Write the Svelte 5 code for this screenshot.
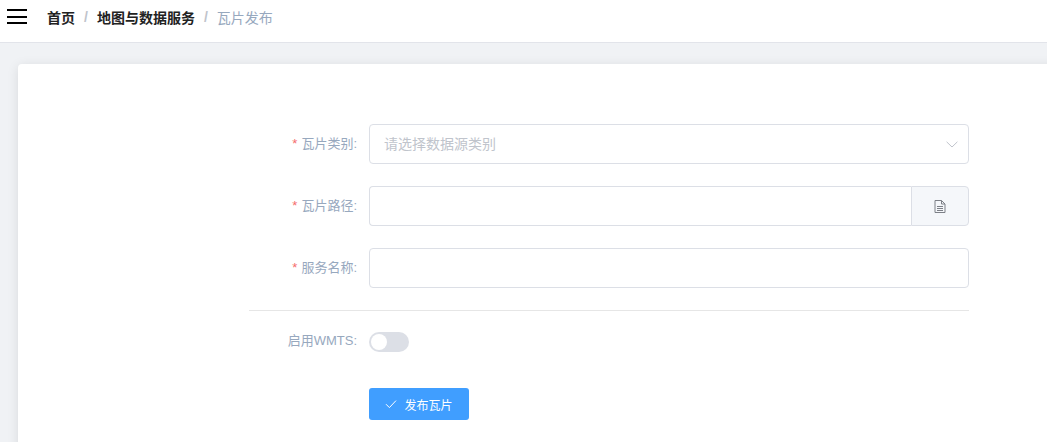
<script lang="ts">
	let wmts = $state(false);
	let category = $state('');
	let tilePath = $state('');
	let serviceName = $state('');
</script>

<div class="page">
	<header class="topbar">
		<button class="hamburger" aria-label="menu">
			<span></span>
			<span></span>
			<span></span>
		</button>
		<nav class="crumbs">
			<span class="crumb">首页</span>
			<span class="sep">/</span>
			<span class="crumb">地图与数据服务</span>
			<span class="sep">/</span>
			<span class="crumb current">瓦片发布</span>
		</nav>
	</header>

	<main class="content">
		<section class="card">
			<form class="form" onsubmit={(e) => e.preventDefault()}>
				<div class="row">
					<label class="label" for="category"><i>*</i>瓦片类别:</label>
					<div class="select">
						<input id="category" bind:value={category} placeholder="请选择数据源类别" readonly />
						<svg class="chevron" viewBox="0 0 12 7" width="12" height="7" aria-hidden="true">
							<path d="M0.6 0.8 L6 6 L11.4 0.8" fill="none" stroke="#c0c4cc" stroke-width="1" />
						</svg>
					</div>
				</div>

				<div class="row">
					<label class="label" for="path"><i>*</i>瓦片路径:</label>
					<div class="group">
						<input id="path" bind:value={tilePath} />
						<button type="button" class="append" aria-label="browse">
							<svg viewBox="0 0 12 13" width="12" height="13" aria-hidden="true">
								<path
									d="M1 0.5 H7.5 L11 4 V12.5 H1 Z M7.5 0.5 V4 H11 M3 6.5 H9 M3 8.5 H9 M3 10.5 H9"
									fill="none"
									stroke="#7d8087"
									stroke-width="1"
								/>
							</svg>
						</button>
					</div>
				</div>

				<div class="row">
					<label class="label" for="name"><i>*</i>服务名称:</label>
					<input id="name" class="input" bind:value={serviceName} />
				</div>

				<div class="divider"></div>

				<div class="row switch-row">
					<span class="label">启用WMTS:</span>
					<button
						type="button"
						class="switch"
						class:on={wmts}
						aria-label="WMTS"
						onclick={() => (wmts = !wmts)}
					></button>
				</div>

				<div class="row submit-row">
					<span class="label"></span>
					<button type="submit" class="primary">
						<svg viewBox="0 0 12 10" width="12" height="10" aria-hidden="true">
							<path d="M1 5.2 L4.4 8.6 L11 1.6" fill="none" stroke="#fff" stroke-width="1" />
						</svg>
						发布瓦片
					</button>
				</div>
			</form>
		</section>
	</main>
</div>

<style>
	:global(body) {
		margin: 0;
		overflow: hidden;
	}

	.page {
		height: 442px;
		overflow: hidden;
		background: #f0f2f5;
		font-family: 'Liberation Sans', 'Noto Sans CJK SC', sans-serif;
		font-size: 13px;
	}

	.topbar {
		display: flex;
		align-items: flex-start;
		height: 42px;
		background: #fff;
		border-bottom: 1px solid #e2e4ea;
	}

	.hamburger {
		display: flex;
		flex-direction: column;
		gap: 4.5px;
		width: 20px;
		margin: 9px 0 0 7px;
		padding: 0;
		border: none;
		background: none;
	}

	.hamburger span {
		height: 2px;
		background: #000;
	}

	.crumbs {
		display: flex;
		align-items: center;
		margin: 7px 0 0 20px;
		font-size: 14px;
	}

	.crumb {
		font-weight: 700;
		color: #222;
	}

	.crumb.current {
		font-weight: 400;
		color: #97a8be;
	}

	.sep {
		margin: 0 9px;
		color: #c0c4cc;
		font-weight: 700;
	}

	.content {
		padding: 21px 0 0 18px;
	}

	.card {
		margin-right: -20px;
		height: 400px;
		padding-top: 60px;
		background: #fff;
		border-radius: 4px;
		box-shadow: 0 2px 12px rgba(0, 0, 0, 0.1);
	}

	.form {
		width: 720px;
		margin-left: 231px;
	}

	.row {
		display: flex;
		align-items: center;
		margin-bottom: 22px;
	}

	.label {
		flex: 0 0 108px;
		margin-right: 12px;
		padding-bottom: 4px;
		text-align: right;
		color: #97a8be;
		white-space: nowrap;
	}

	.label i {
		margin-right: 4px;
		font-style: normal;
		color: #f56c6c;
	}

	input {
		box-sizing: border-box;
		width: 100%;
		height: 40px;
		padding: 0 14px;
		border: 1px solid #dcdfe6;
		border-radius: 4px;
		outline: none;
		font: inherit;
		font-size: 14px;
		color: #606266;
		background: #fff;
	}

	input::placeholder {
		color: #c0c4cc;
		opacity: 1;
	}

	.input,
	.select,
	.group {
		flex: 1;
	}

	.select {
		position: relative;
	}

	.chevron {
		position: absolute;
		right: 11px;
		top: 17px;
	}

	.group {
		display: flex;
	}

	.group input {
		flex: 1;
		border-right: none;
		border-radius: 4px 0 0 4px;
	}

	.append {
		display: flex;
		align-items: center;
		justify-content: center;
		flex: 0 0 58px;
		height: 40px;
		padding: 0 1px 0 0;
		background: #f5f7fa;
		border: 1px solid #dcdfe6;
		border-radius: 0 4px 4px 0;
	}

	.divider {
		height: 1px;
		margin-bottom: 21px;
		background: #e6e6e6;
	}

	.switch-row {
		height: 20px;
		margin-bottom: 36px;
	}

	.switch-row .label {
		padding-bottom: 6px;
	}

	.switch {
		position: relative;
		width: 40px;
		height: 20px;
		padding: 0;
		border: none;
		border-radius: 10px;
		background: #dcdfe6;
	}

	.switch::after {
		content: '';
		position: absolute;
		top: 2px;
		left: 2px;
		width: 16px;
		height: 16px;
		border-radius: 50%;
		background: #fff;
	}

	.switch.on {
		background: #409eff;
	}

	.switch.on::after {
		left: 22px;
	}

	.primary {
		display: flex;
		align-items: center;
		justify-content: center;
		gap: 7px;
		width: 100px;
		height: 32px;
		padding: 0;
		border: none;
		border-radius: 3px;
		background: #409eff;
		color: #fff;
		font: inherit;
		font-size: 12px;
	}
</style>
